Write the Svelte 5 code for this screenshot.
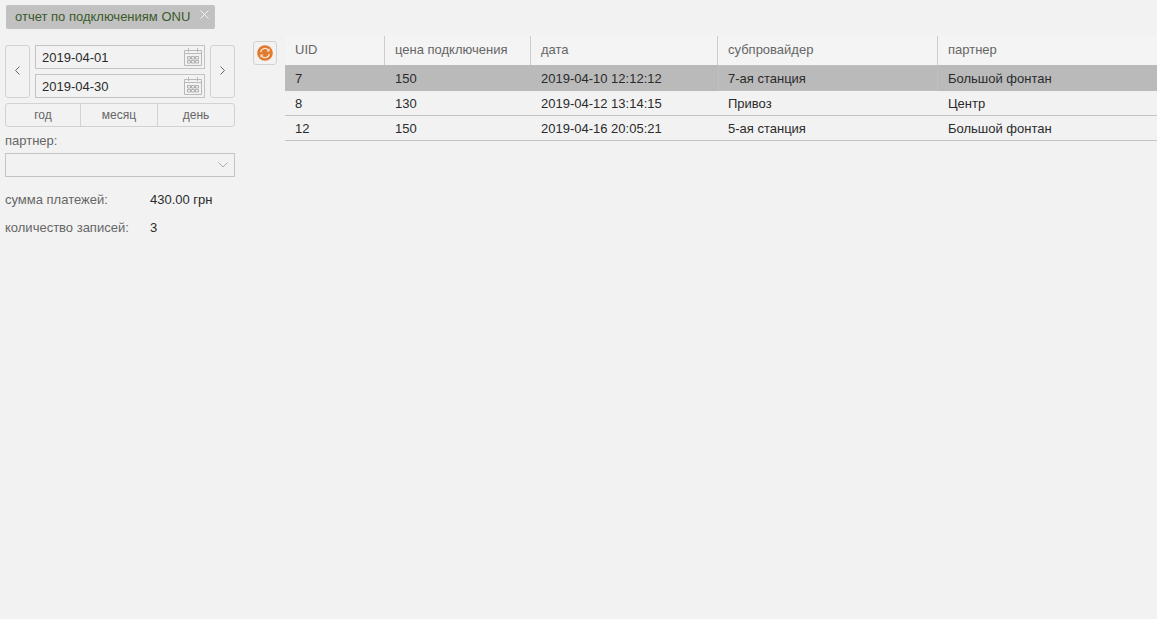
<script>
	const columns = [
		{ title: 'UID', width: 100 },
		{ title: 'цена подключения', width: 146 },
		{ title: 'дата', width: 187 },
		{ title: 'субпровайдер', width: 220 },
		{ title: 'партнер', width: 219 }
	];
	const rows = [
		['7', '150', '2019-04-10 12:12:12', '7-ая станция', 'Большой фонтан'],
		['8', '130', '2019-04-12 13:14:15', 'Привоз', 'Центр'],
		['12', '150', '2019-04-16 20:05:21', '5-ая станция', 'Большой фонтан']
	];
	const dates = ['2019-04-01', '2019-04-30'];
	const ranges = ['год', 'месяц', 'день'];
</script>

<div class="page">
	<div class="tabs">
		<div class="tab">
			<span>отчет по подключениям ONU</span>
			<svg class="close" width="9" height="9" viewBox="0 0 9 9" aria-hidden="true">
				<path d="M.5.5l8 8M8.5.5l-8 8" />
			</svg>
		</div>
	</div>

	<div class="content">
		<aside class="side">
			<div class="period">
				<button class="step" aria-label="назад">
					<svg width="5" height="9" viewBox="0 0 5 9"><path d="M4.500.5l-4 4 4 4" /></svg>
				</button>
				<div class="dates">
					{#each dates as date}
						<div class="date">
							<span>{date}</span>
							<svg width="18" height="18" viewBox="0 0 18 18" aria-hidden="true">
								<path class="cal" d="M.5 2.500h17v15H.5zM.5 5.500h17M4.500 0v4M13.500 0v4" />
								<path class="dots" d="M3.500 8.500h3v2.500h-3zM7.500 8.500h3v2.500h-3zM11.500 8.500h3v2.500h-3zM3.500 12.500h3v2.500h-3zM7.500 12.500h3v2.500h-3zM11.500 12.500h3v2.500h-3z" />
							</svg>
						</div>
					{/each}
				</div>
				<button class="step" aria-label="вперед">
					<svg width="5" height="9" viewBox="0 0 5 9"><path d="M.5.5l4 4-4 4" /></svg>
				</button>
			</div>

			<div class="ranges">
				{#each ranges as range}
					<button>{range}</button>
				{/each}
			</div>

			<div class="label">партнер:</div>
			<div class="select">
				<svg width="10" height="6" viewBox="0 0 10 6" aria-hidden="true"><path d="M.5.500L5 5 9.500.500" /></svg>
			</div>

			<div class="stat first"><span>сумма платежей:</span><b>430.00 грн</b></div>
			<div class="stat"><span>количество записей:</span><b>3</b></div>
		</aside>

		<button class="refresh" aria-label="обновить">
			<svg width="16" height="16" viewBox="0 0 16 16">
				<circle cx="8" cy="8" r="7.800" fill="#df7a2e" />
				<path d="M3.600 7.200a4.500 4.500 0 0 1 7.700-2.400M12.400 8.800a4.500 4.500 0 0 1-7.700 2.400" fill="none" stroke="#fbe3cc" stroke-width="1.400" />
				<path d="M12.600 3.200v3.200H9.400zM3.400 12.800V9.600h3.200z" fill="#fbe3cc" />
			</svg>
		</button>

		<div class="table">
			<div class="head">
				{#each columns as col}
					<div class="th" style="width: {col.width}px">{col.title}</div>
				{/each}
			</div>
			{#each rows as row, i}
				<div class="row" class:selected={i === 0}>
					{#each row as cell, c}
						<div class="td" style="width: {columns[c].width}px">{cell}</div>
					{/each}
				</div>
			{/each}
		</div>
	</div>
</div>

<style>
	:global(body) {
		background: #f2f2f2;
		overflow: hidden;
	}

	.page {
		height: 619px;
		font-family: "Liberation Sans", Arial, sans-serif;
		font-size: 13px;
		color: #2b2b2b;
		background: #f2f2f2;
	}

	.tabs {
		padding: 5px 0 0 6px;
		height: 30px;
		box-sizing: border-box;
	}

	.tab {
		display: inline-flex;
		align-items: flex-start;
		height: 24px;
		box-sizing: border-box;
		width: 209px;
		padding: 4px 0 0 9px;
		background: #c1c1c1;
		border-radius: 2px;
		color: #3a5a2a;
		position: relative;
	}

	.close {
		position: absolute;
		right: 6px;
		top: 5px;
		fill: none;
		stroke: #f2f2f2;
	}

	.content {
		display: flex;
		align-items: flex-start;
	}

	.side {
		width: 230px;
		margin: 15px 0 0 5px;
		color: #666;
	}

	button {
		padding: 0;
		margin: 0;
		font: inherit;
		color: inherit;
		background: transparent;
		border: 1px solid #d2d2d2;
		cursor: pointer;
	}

	.period {
		display: flex;
		justify-content: space-between;
		height: 53px;
	}

	.step {
		width: 25px;
		border-radius: 3px;
		display: flex;
		align-items: center;
		justify-content: center;
		padding-bottom: 2px;
	}

	.step path,
	.select path {
		fill: none;
		stroke: #667;
	}

	.dates {
		display: flex;
		flex-direction: column;
		justify-content: space-between;
	}

	.date {
		box-sizing: border-box;
		width: 170px;
		height: 24px;
		padding: 0 1px 0 6px;
		border: 1px solid #c4c4c4;
		display: flex;
		align-items: center;
		justify-content: space-between;
		color: #2b2b2b;
	}

	.date svg {
		margin-right: 1px;
	}

	.cal {
		fill: none;
		stroke: #b9b9b9;
	}

	.dots {
		fill: none;
		stroke: #b0b0b0;
	}

	.ranges {
		display: grid;
		grid-template-columns: 74px 77px 77px;
		margin-top: 5px;
		height: 24px;
		border: 1px solid #d2d2d2;
		border-radius: 3px;
		box-sizing: border-box;
		font-size: 12px;
	}

	.ranges button {
		border: 0;
		border-left: 1px solid #d2d2d2;
	}

	.ranges button:first-child {
		border-left: 0;
	}

	.label {
		margin-top: 6px;
		height: 15px;
		line-height: 15px;
	}

	.select {
		box-sizing: border-box;
		margin-top: 5px;
		height: 24px;
		border: 1px solid #c4c4c4;
		display: flex;
		align-items: center;
		justify-content: flex-end;
		padding-right: 6px;
	}

	.select path {
		stroke: #aaa;
	}

	.stat {
		display: flex;
		height: 28px;
		line-height: 15px;
	}

	.stat.first {
		margin-top: 15px;
	}

	.stat span {
		width: 145px;
	}

	.stat b {
		font-weight: 400;
		color: #2b2b2b;
	}

	.refresh {
		box-sizing: border-box;
		width: 24px;
		height: 24px;
		margin: 11px 8px 0 18px;
		border-radius: 3px;
		display: flex;
		align-items: center;
		justify-content: center;
		flex: none;
	}

	.table {
		flex: none;
		width: 872px;
		margin-top: 6px;
	}

	.head {
		display: flex;
		height: 29px;
		background: #f4f4f4;
	}

	.th {
		box-sizing: border-box;
		padding: 0 10px;
		line-height: 28px;
		color: #666;
		border-right: 1px solid #ccc;
		white-space: nowrap;
	}

	.th:last-child {
		border-right: 0;
	}

	.row {
		display: flex;
		height: 25px;
		border-bottom: 1px solid #c4c4c4;
		box-sizing: border-box;
		line-height: 25px;
	}

	.row.selected {
		height: 26px;
		border-bottom: 0;
		line-height: 27px;
		background: #bababa;
	}

	.row.selected .td:nth-child(4) {
		box-shadow: inset 0 0 0 1px #c0c0c0;
	}

	.td {
		box-sizing: border-box;
		padding: 0 10px;
		white-space: nowrap;
		flex: none;
	}
</style>
